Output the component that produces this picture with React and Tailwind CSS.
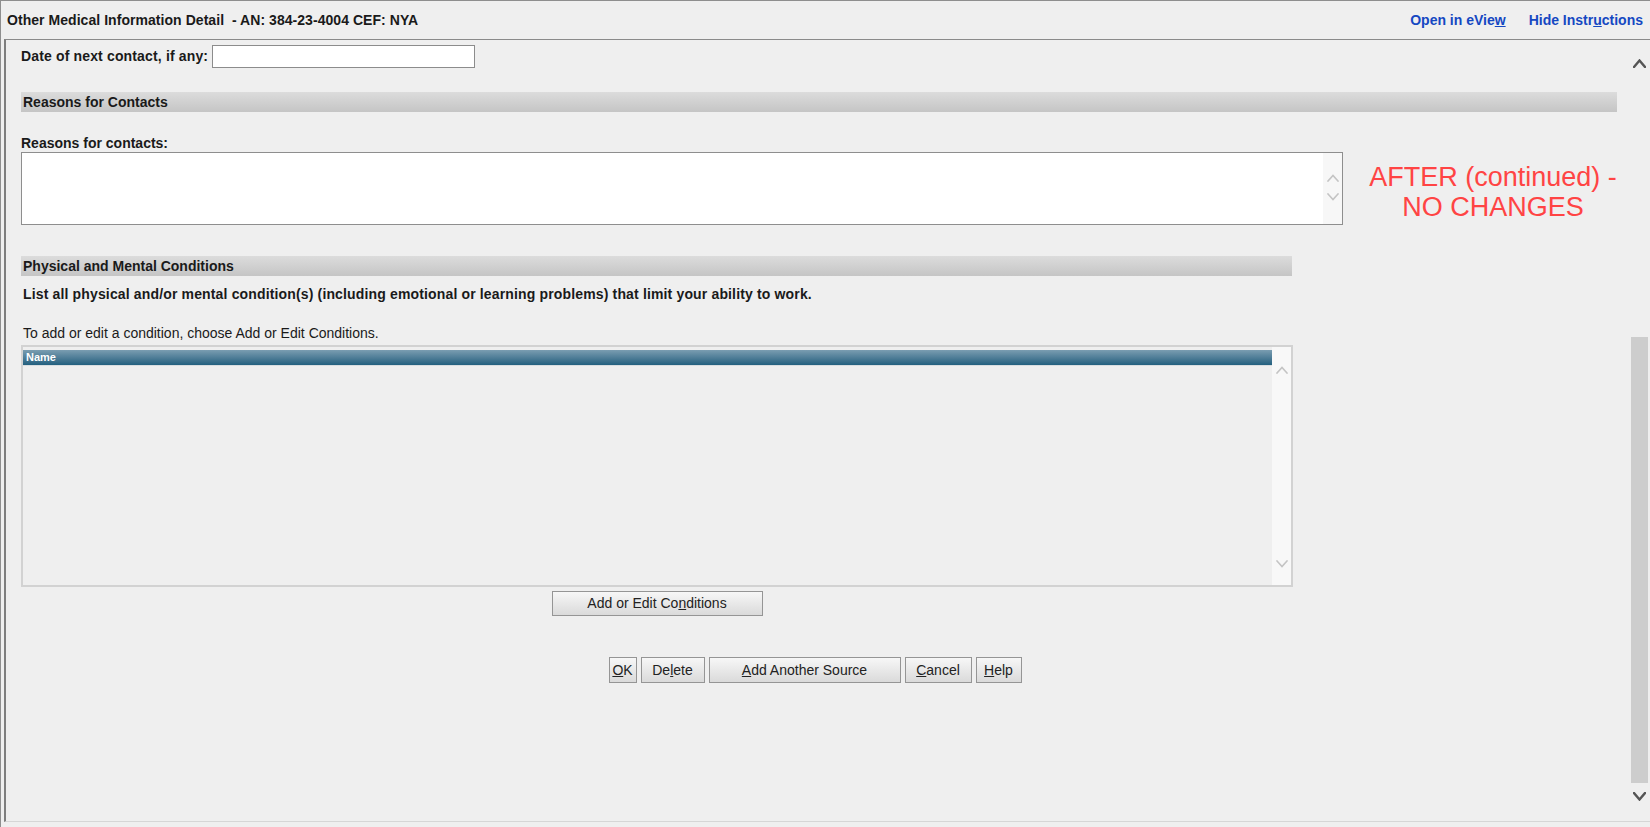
import React from "react";

function Chevron({ dir = "up", color = "#555", w = 12, h = 8, sw = 2.2 }) {
  const pts = dir === "up" ? `1,${h - 1} ${w / 2},1.5 ${w - 1},${h - 1}` : `1,1 ${w / 2},${h - 1.5} ${w - 1},1`;
  return (
    <svg width={w} height={h} viewBox={`0 0 ${w} ${h}`} className="block">
      <polyline points={pts} fill="none" stroke={color} strokeWidth={sw} strokeLinecap="square" strokeLinejoin="miter" />
    </svg>
  );
}

function Btn({ children, className = "" }) {
  return (
    <div
      className={
        "flex items-center justify-center border border-[#959595] bg-gradient-to-b from-[#f7f7f7] to-[#dadada] text-[14px] text-[#222] " +
        className
      }
    >
      {children}
    </div>
  );
}

function SectionBar({ children, className = "" }) {
  return (
    <div
      className={
        "h-[20px] flex items-center pl-[2px] bg-gradient-to-b from-[#dcdcdc] to-[#c5c5c5] font-bold text-[14px] text-[#1a1a1a] " +
        className
      }
    >
      {children}
    </div>
  );
}

export default function App() {
  return (
    <div className="w-[1650px] h-[827px] overflow-hidden bg-[#efefef] border-t border-l border-[#8e8e8e] flex flex-col font-['Liberation_Sans',Arial,sans-serif] text-[#1a1a1a]">
      {/* Title bar */}
      <div className="h-[38px] shrink-0 flex items-center justify-between pl-[6px] pr-[7px]">
        <span className="font-bold text-[14px] whitespace-pre tracking-[0.05px]">
          Other Medical Information Detail  - AN: 384-23-4004 CEF: NYA
        </span>
        <div className="flex gap-[23px] font-bold text-[14px] text-[#1548c2]">
          <span>
            Open in eVie<span className="underline">w</span>
          </span>
          <span>
            Hide Instr<span className="underline">u</span>ctions
          </span>
        </div>
      </div>

      {/* Main panel */}
      <div className="flex-1 ml-[3px] mb-[5px] border-t border-t-[#8a8a8a] border-l-2 border-l-[#7e7e7e] border-b border-b-[#d6d6d6] flex min-h-0">
        {/* content */}
        <div className="flex-1 min-w-0 flex flex-col pl-[15px]">
          {/* Date row */}
          <div className="mt-[5px] h-[23px] flex items-center gap-[4px]">
            <span className="font-bold text-[14px] tracking-[0.15px]">Date of next contact, if any:</span>
            <div className="w-[263px] h-[23px] bg-white border border-[#8c8c8c]" />
          </div>

          <SectionBar className="mt-[24px] w-[1596px]">Reasons for Contacts</SectionBar>

          <div className="mt-[23px] leading-[16px] font-bold text-[14px]">Reasons for contacts:</div>

          <div className="mt-[1px] h-[73px] flex">
            <div className="w-[1322px] h-[73px] shrink-0 bg-white border border-[#8e8e8e] flex justify-end">
              <div className="w-[19px] bg-[#f7f7f7] flex flex-col items-center pt-[21px] gap-[11px]">
                <Chevron dir="up" color="#c4c4c4" w={12} h={8} sw={1.6} />
                <Chevron dir="down" color="#c4c4c4" w={12} h={8} sw={1.6} />
              </div>
            </div>
            <div className="w-[300px] shrink-0 pt-[10px] text-center text-[27px] leading-[30px] text-[#ff4444] whitespace-nowrap">
              <div>AFTER (continued) -</div>
              <div>NO CHANGES</div>
            </div>
          </div>

          {/* Physical and Mental Conditions */}
          <div className="mt-[31px] w-[1272px] flex flex-col">
            <SectionBar className="w-[1271px]">Physical and Mental Conditions</SectionBar>
            <div className="mt-[10px] leading-[16px] font-bold text-[14px] pl-[2px] tracking-[0.15px] whitespace-nowrap">
              List all physical and/or mental condition(s) (including emotional or learning problems) that limit your ability to work.
            </div>
            <div className="mt-[23px] leading-[16px] text-[14px] pl-[2px]">
              To add or edit a condition, choose Add or Edit Conditions.
            </div>

            <div className="mt-[4px] h-[242px] border-2 border-[#d2d2d2] flex">
              <div className="flex-1 pt-[3px]">
                <div className="h-[16px] bg-gradient-to-b from-[#7a9db1] to-[#22607f] border-b border-[#d8dde0] flex items-center pl-[3px] text-white font-bold text-[11px]">
                  Name
                </div>
              </div>
              <div className="w-[19px] bg-[#f8f8f8] flex flex-col items-center justify-between pt-[19px] pb-[17px]">
                <Chevron dir="up" color="#c4c4c4" w={12} h={8} sw={1.6} />
                <Chevron dir="down" color="#c4c4c4" w={12} h={8} sw={1.6} />
              </div>
            </div>

            <div className="mt-[4px] flex justify-center">
              <Btn className="w-[211px] h-[25px]">
                <span>
                  Add or Edit Co<span className="underline">n</span>ditions
                </span>
              </Btn>
            </div>
          </div>

          {/* Bottom buttons */}
          <div className="mt-[41px] flex justify-center gap-[4px] pr-[21px]">
            <Btn className="w-[28px] h-[26px]">
              <span>
                <span className="underline">O</span>K
              </span>
            </Btn>
            <Btn className="w-[64px] h-[26px]">
              <span>
                De<span className="underline">l</span>ete
              </span>
            </Btn>
            <Btn className="w-[192px] h-[26px]">
              <span>
                <span className="underline">A</span>dd Another Source
              </span>
            </Btn>
            <Btn className="w-[67px] h-[26px]">
              <span>
                <span className="underline">C</span>ancel
              </span>
            </Btn>
            <Btn className="w-[46px] h-[26px]">
              <span>
                <span className="underline">H</span>elp
              </span>
            </Btn>
          </div>
        </div>

        {/* main scrollbar */}
        <div className="w-[18px] shrink-0 mr-[2px] flex flex-col items-center">
          <div className="mt-[19px]">
            <Chevron dir="up" color="#555" w={13} h={9} sw={2.4} />
          </div>
          <div className="mt-[269px] w-[17px] h-[446px] bg-[#cdcdcd]" />
          <div className="mt-[9px]">
            <Chevron dir="down" color="#555" w={13} h={9} sw={2.4} />
          </div>
        </div>
      </div>
    </div>
  );
}
